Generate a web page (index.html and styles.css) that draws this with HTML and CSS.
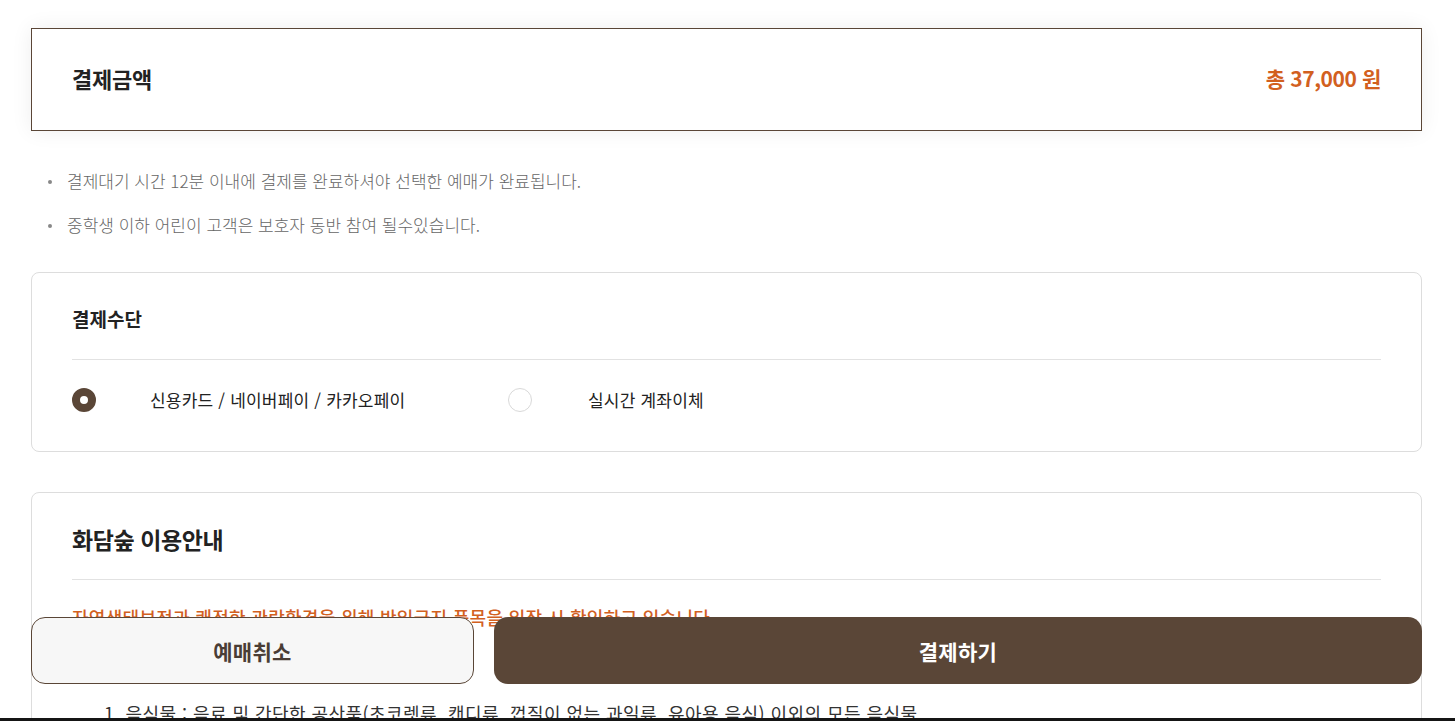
FILE: index.html
```html
<!DOCTYPE html>
<html lang="ko">
<head>
    <meta charset="UTF-8">
    <title>결제하기</title>
    <link rel="stylesheet" href="styles.css">
</head>
<body>
<div class="wrap">
    <div class="total-box">
        <h2 class="total-title">결제금액</h2>
        <div class="total-price">총 37,000 원</div>
    </div>

    <ul class="notice">
        <li>결제대기 시간 12분 이내에 결제를 완료하셔야 선택한 예매가 완료됩니다.</li>
        <li>중학생 이하 어린이 고객은 보호자 동반 참여 될수있습니다.</li>
    </ul>

    <div class="card">
        <div class="card-head">
            <h3 class="card-title">결제수단</h3>
        </div>
        <div class="pay-options">
            <label class="option">
                <span class="radio checked"></span>
                <span class="option-text">신용카드 / 네이버페이 / 카카오페이</span>
            </label>
            <label class="option">
                <span class="radio"></span>
                <span class="option-text">실시간 계좌이체</span>
            </label>
        </div>
    </div>

    <div class="card guide">
        <div class="card-head">
            <h3 class="card-title big">화담숲 이용안내</h3>
        </div>
        <p class="warn">자연생태보전과 쾌적한 관람환경을 위해 반입금지 품목을 입장 시 확인하고 있습니다.</p>
        <ol class="guide-list">
            <li>1. 음식물 : 음료 및 간단한 공산품(초코렛류, 캔디류, 껍질이 없는 과일류, 유아용 음식) 이외의 모든 음식물</li>
            <li>2. 돗자리, 텐트, 그늘막, 의자 등 개인 용품</li>
        </ol>
    </div>
</div>

<div class="bottom-btns">
    <button class="btn btn-cancel">예매취소</button>
    <button class="btn btn-pay">결제하기</button>
</div>
<div class="bottom-edge"></div>
</body>
</html>
```

FILE: styles.css
```css
* {
    box-sizing: border-box;
}

body {
    margin: 0;
    background: #fff;
    font-family: "Noto Sans CJK KR", "Noto Sans", sans-serif;
    color: #222;
}

.wrap {
    padding: 28px 33px 0 31px;
}

/* 결제금액 */
.total-box {
    display: flex;
    align-items: center;
    justify-content: space-between;
    height: 103px;
    padding: 0 40px 3px;
    border: 1px solid #5a4637;
    background: #fff;
    box-shadow: 0 0 20px rgba(0, 0, 0, 0.07);
}

.total-title {
    margin: 0;
    font-size: 22px;
    font-weight: 700;
    letter-spacing: -0.2px;
    color: #222;
}

.total-price {
    font-size: 21px;
    font-weight: 600;
    letter-spacing: -0.4px;
    color: #d2601f;
}

/* 안내 문구 */
.notice {
    list-style: none;
    margin: 38px 0 35px;
    padding: 0 0 0 36px;
}

.notice li {
    position: relative;
    font-size: 17px;
    line-height: 24px;
    font-weight: 300;
    color: #666;
    margin-bottom: 20px;
}

.notice li:last-child {
    margin-bottom: 0;
}

.notice li::before {
    content: "";
    position: absolute;
    left: -19px;
    top: 11px;
    width: 4px;
    height: 4px;
    border-radius: 50%;
    background: #888;
}

/* 카드 */
.card {
    border: 1px solid #ddd;
    border-radius: 8px;
    padding: 0 40px 39px;
    margin-bottom: 40px;
    background: #fff;
}

.card-head {
    padding: 33px 0 27px;
    border-bottom: 1px solid #e2e2e2;
}

.card-title {
    margin: 0;
    font-size: 19px;
    line-height: 26px;
    font-weight: 700;
    color: #222;
}

.card-title.big {
    font-size: 23px;
    letter-spacing: -0.4px;
}

.pay-options {
    display: flex;
    padding-top: 28px;
}

.option {
    display: flex;
    align-items: center;
    gap: 54px;
    width: 436px;
    cursor: pointer;
}

.option + .option {
    gap: 56px;
}

.radio {
    width: 24px;
    height: 24px;
    border-radius: 50%;
    border: 1px solid #d9d9d9;
    background: #fff;
}

.radio.checked {
    border: 8px solid #5a4637;
}

.option-text {
    font-size: 17px;
    line-height: 24px;
    letter-spacing: 0.2px;
    color: #222;
}

/* 이용안내 */
.guide {
    padding-bottom: 60px;
}

.warn {
    margin: 25px 0 0;
    font-size: 18px;
    line-height: 24px;
    font-weight: 500;
    letter-spacing: 0.3px;
    color: #d2601f;
}

.guide-list {
    list-style: none;
    margin: 72px 0 0;
    padding: 0 0 0 32px;
}

.guide-list li {
    font-size: 18px;
    line-height: 24px;
    letter-spacing: 0.45px;
    color: #333;
    margin-bottom: 12px;
}

/* 하단 버튼 */
.bottom-btns {
    position: fixed;
    left: 31px;
    right: 33px;
    bottom: 37px;
    display: flex;
    gap: 20px;
    height: 67px;
}

.btn {
    border-radius: 14px;
    font-family: "Noto Sans CJK KR", "Noto Sans", sans-serif;
    font-size: 21px;
    font-weight: 700;
    letter-spacing: 0.3px;
    cursor: pointer;
}

.btn-cancel {
    width: 443px;
    flex: 0 0 443px;
    background: #f7f7f7;
    border: 1px solid #5a4637;
    color: #4a3d35;
}

.btn-pay {
    flex: 1;
    background: #5a4637;
    border: none;
    color: #fff;
}

.bottom-edge {
    position: fixed;
    left: 0;
    right: 0;
    bottom: 0;
    height: 3px;
    background: #151515;
}
```
